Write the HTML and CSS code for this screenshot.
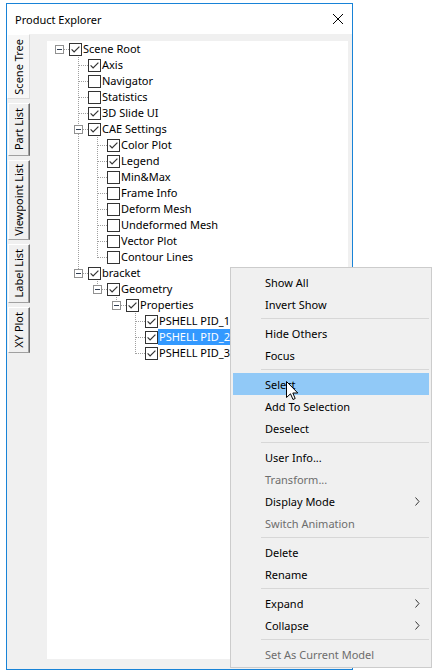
FILE: index.html
```html
<!DOCTYPE html>
<html>
<head>
<meta charset="utf-8">
<title>Product Explorer</title>
<link rel="stylesheet" href="styles.css">
</head>
<body>
<svg class="defs" width="0" height="0" aria-hidden="true">
  <defs>
    <symbol id="cb-on" viewBox="0 0 13 13">
      <rect x="0.5" y="0.5" width="12" height="12" fill="#fff" stroke="#333"/>
      <path d="M2.6 6.4 L5.1 8.9 L10.4 3.6" fill="none" stroke="#333" stroke-width="1.2"/>
    </symbol>
    <symbol id="cb-off" viewBox="0 0 13 13">
      <rect x="0.5" y="0.5" width="12" height="12" fill="#fff" stroke="#333"/>
    </symbol>
  </defs>
</svg>
<div class="screen">
  <div class="window">
    <div class="titlebar">
      <span class="title">Product Explorer</span>
      <svg class="close" width="10" height="10" viewBox="0 0 10 10"><path d="M0 0 L10 10 M10 0 L0 10" stroke="#000" stroke-width="1"/></svg>
    </div>
    <div class="win-body">
      <div class="tabs">
        <div class="tab tab-selected tab-scene"><span>Scene Tree</span></div>
        <div class="tab tab-part"><span>Part List</span></div>
        <div class="tab tab-view"><span>Viewpoint List</span></div>
        <div class="tab tab-label"><span>Label List</span></div>
        <div class="tab tab-xy"><span>XY Plot</span></div>
      </div>
      <div class="tree">
        <svg class="tree-lines" width="301" height="618">
          <g stroke="#a0a0a0" stroke-width="1" stroke-dasharray="1 1" shape-rendering="crispEdges" fill="none">
            <line x1="17" y1="8.5" x2="22" y2="8.5"/>
            <line x1="31.5" y1="16" x2="31.5" y2="84"/>
            <line x1="31.5" y1="93" x2="31.5" y2="228"/>
            <line x1="32" y1="24.5" x2="41" y2="24.5"/>
            <line x1="32" y1="40.5" x2="41" y2="40.5"/>
            <line x1="32" y1="56.5" x2="41" y2="56.5"/>
            <line x1="32" y1="72.5" x2="41" y2="72.5"/>
            <line x1="36" y1="88.5" x2="41" y2="88.5"/>
            <line x1="36" y1="232.5" x2="41" y2="232.5"/>
            <line x1="50.5" y1="96" x2="50.5" y2="217"/>
            <line x1="51" y1="104.5" x2="60" y2="104.5"/>
            <line x1="51" y1="120.5" x2="60" y2="120.5"/>
            <line x1="51" y1="136.5" x2="60" y2="136.5"/>
            <line x1="51" y1="152.5" x2="60" y2="152.5"/>
            <line x1="51" y1="168.5" x2="60" y2="168.5"/>
            <line x1="51" y1="184.5" x2="60" y2="184.5"/>
            <line x1="51" y1="200.5" x2="60" y2="200.5"/>
            <line x1="51" y1="216.5" x2="60" y2="216.5"/>
            <line x1="50.5" y1="240" x2="50.5" y2="244"/>
            <line x1="55" y1="248.5" x2="60" y2="248.5"/>
            <line x1="69.5" y1="256" x2="69.5" y2="260"/>
            <line x1="74" y1="264.5" x2="79" y2="264.5"/>
            <line x1="88.5" y1="272" x2="88.5" y2="313"/>
            <line x1="89" y1="280.5" x2="98" y2="280.5"/>
            <line x1="89" y1="296.5" x2="98" y2="296.5"/>
            <line x1="89" y1="312.5" x2="98" y2="312.5"/>
          </g>
        </svg>
        <ul class="rows">
          <li class="row l0"><span class="exp"></span><svg class="cb"><use href="#cb-on"/></svg><span class="label">Scene Root</span></li>
          <li class="row l1"><span class="exp-none"></span><svg class="cb"><use href="#cb-on"/></svg><span class="label">Axis</span></li>
          <li class="row l1"><span class="exp-none"></span><svg class="cb"><use href="#cb-off"/></svg><span class="label">Navigator</span></li>
          <li class="row l1"><span class="exp-none"></span><svg class="cb"><use href="#cb-off"/></svg><span class="label">Statistics</span></li>
          <li class="row l1"><span class="exp-none"></span><svg class="cb"><use href="#cb-on"/></svg><span class="label">3D Slide UI</span></li>
          <li class="row l1"><span class="exp"></span><svg class="cb"><use href="#cb-on"/></svg><span class="label">CAE Settings</span></li>
          <li class="row l2"><span class="exp-none"></span><svg class="cb"><use href="#cb-on"/></svg><span class="label">Color Plot</span></li>
          <li class="row l2"><span class="exp-none"></span><svg class="cb"><use href="#cb-on"/></svg><span class="label">Legend</span></li>
          <li class="row l2"><span class="exp-none"></span><svg class="cb"><use href="#cb-off"/></svg><span class="label">Min&amp;Max</span></li>
          <li class="row l2"><span class="exp-none"></span><svg class="cb"><use href="#cb-off"/></svg><span class="label">Frame Info</span></li>
          <li class="row l2"><span class="exp-none"></span><svg class="cb"><use href="#cb-off"/></svg><span class="label">Deform Mesh</span></li>
          <li class="row l2"><span class="exp-none"></span><svg class="cb"><use href="#cb-off"/></svg><span class="label">Undeformed Mesh</span></li>
          <li class="row l2"><span class="exp-none"></span><svg class="cb"><use href="#cb-off"/></svg><span class="label">Vector Plot</span></li>
          <li class="row l2"><span class="exp-none"></span><svg class="cb"><use href="#cb-off"/></svg><span class="label">Contour Lines</span></li>
          <li class="row l1"><span class="exp"></span><svg class="cb"><use href="#cb-on"/></svg><span class="label">bracket</span></li>
          <li class="row l2"><span class="exp"></span><svg class="cb"><use href="#cb-on"/></svg><span class="label">Geometry</span></li>
          <li class="row l3"><span class="exp"></span><svg class="cb"><use href="#cb-on"/></svg><span class="label">Properties</span></li>
          <li class="row l4"><span class="exp-none"></span><svg class="cb"><use href="#cb-on"/></svg><span class="label">PSHELL PID_1</span></li>
          <li class="row l4"><span class="exp-none"></span><svg class="cb"><use href="#cb-on"/></svg><span class="label selected">PSHELL PID_2</span></li>
          <li class="row l4"><span class="exp-none"></span><svg class="cb"><use href="#cb-on"/></svg><span class="label">PSHELL PID_3</span></li>
        </ul>
      </div>
    </div>
  </div>

  <div class="menu">
    <div class="mi">Show All</div>
    <div class="mi">Invert Show</div>
    <div class="sep"></div>
    <div class="mi">Hide Others</div>
    <div class="mi">Focus</div>
    <div class="sep"></div>
    <div class="mi hover">Select</div>
    <div class="mi">Add To Selection</div>
    <div class="mi">Deselect</div>
    <div class="sep"></div>
    <div class="mi">User Info...</div>
    <div class="mi disabled">Transform...</div>
    <div class="mi">Display Mode<svg class="arrow" width="5" height="9" viewBox="0 0 5 9"><path d="M0.5 0.5 L4 4.5 L0.5 8.5" fill="none" stroke="#333" stroke-width="1"/></svg></div>
    <div class="mi disabled">Switch Animation</div>
    <div class="sep"></div>
    <div class="mi">Delete</div>
    <div class="mi">Rename</div>
    <div class="sep"></div>
    <div class="mi">Expand<svg class="arrow" width="5" height="9" viewBox="0 0 5 9"><path d="M0.5 0.5 L4 4.5 L0.5 8.5" fill="none" stroke="#333" stroke-width="1"/></svg></div>
    <div class="mi">Collapse<svg class="arrow" width="5" height="9" viewBox="0 0 5 9"><path d="M0.5 0.5 L4 4.5 L0.5 8.5" fill="none" stroke="#333" stroke-width="1"/></svg></div>
    <div class="sep"></div>
    <div class="mi disabled">Set As Current Model</div>
  </div>

  <svg class="cursor" width="13" height="20" viewBox="0 0 13 20">
    <path d="M0.5 0.5 L0.5 16.5 L4.5 12.8 L7 18.5 L9.2 17.5 L6.8 12 L11.8 12 Z" fill="#fff" stroke="#000" stroke-width="1" stroke-linejoin="miter"/>
  </svg>
</div>
</body>
</html>
```

FILE: styles.css
```css
* { box-sizing: border-box; }

html, body {
  margin: 0;
  padding: 0;
  background: #fff;
}

body {
  font-family: "Noto Sans", "Open Sans", "DejaVu Sans", sans-serif;
  font-size: 11px;
  color: #000;
}

.defs {
  position: absolute;
  width: 0;
  height: 0;
  overflow: hidden;
}

.screen {
  position: relative;
  width: 436px;
  height: 672px;
  overflow: hidden;
  padding: 3px 0 0 6px;
}

.window {
  width: 347px;
  height: 667px;
  border: 1px solid #1883d7;
  background: #f0f0f0;
  display: flex;
  flex-direction: column;
}

.titlebar {
  flex: none;
  height: 30px;
  background: #fff;
  display: flex;
  align-items: center;
  padding-left: 8px;
}

.title {
  font-size: 11px;
  color: #000;
}

.close {
  margin-left: auto;
  margin-right: 9px;
  display: block;
}

.win-body {
  flex: 1;
  display: flex;
  align-items: flex-start;
  padding-right: 4px;
}

/* vertical tabs */
.tabs {
  width: 23px;
  flex: none;
  display: flex;
  flex-direction: column;
  gap: 4px;
}

.tab {
  width: 22px;
  margin-left: 1px;
  display: flex;
  align-items: center;
  justify-content: center;
  background: #f0f0f0;
  border-top: 1px solid #fff;
  border-left: 1px solid #fff;
  border-right: 1px solid #696969;
  border-bottom: 1px solid #a0a0a0;
  box-shadow: inset -1px 0 0 #a0a0a0;
}

.tab span {
  writing-mode: vertical-rl;
  transform: rotate(180deg);
  white-space: nowrap;
  line-height: 14px;
}

.tab-selected {
  width: 23px;
  margin-left: 0;
  background: #f7f7f7;
  border-top: 1px solid #fff;
  border-left: 1px solid #fff;
  border-right: 1px solid #dadada;
  border-bottom: 1px solid #dadada;
  box-shadow: none;
}

.tab-scene { height: 65px; }
.tab-part { height: 53px; }
.tab-view { height: 80px; }
.tab-label { height: 59px; }
.tab-xy { height: 46px; }

/* tree */
.tree {
  position: relative;
  margin-left: 17px;
  margin-top: 7px;
  width: 301px;
  height: 618px;
  background: #fff;
}

.tree-lines {
  position: absolute;
  left: 0;
  top: 0;
}

.rows {
  position: relative;
  list-style: none;
  margin: 0;
  padding: 0;
}

.row {
  height: 16px;
  display: flex;
  align-items: flex-start;
  white-space: nowrap;
}

.l0 { padding-left: 8px; }
.l1 { padding-left: 27px; }
.l2 { padding-left: 46px; }
.l3 { padding-left: 65px; }
.l4 { padding-left: 84px; }

.exp,
.exp-none {
  flex: none;
  width: 9px;
  height: 9px;
  margin-top: 4px;
  margin-right: 5px;
}

.exp {
  border: 1px solid #919191;
  background: #fff;
  display: flex;
  align-items: center;
  justify-content: center;
}

.exp::after {
  content: "";
  width: 5px;
  height: 1px;
  background: #2f3d52;
}

.cb {
  flex: none;
  width: 13px;
  height: 13px;
  margin-top: 2px;
  display: block;
}

.label {
  padding: 0 1px;
  height: 16px;
  line-height: 16px;
}

.label.selected {
  background: #3399ff;
  color: #fff;
}

/* context menu */
.menu {
  position: absolute;
  left: 230px;
  top: 267px;
  width: 202px;
  height: 401px;
  border: 1px solid #cccccc;
  background: #f0f0f0;
  padding: 3px 2px 2px 2px;
}

.mi {
  height: 22px;
  display: flex;
  align-items: center;
  padding-left: 32px;
  white-space: nowrap;
}

.mi.hover {
  background: #91c9f7;
}

.mi.disabled {
  color: #6d6d6d;
}

.arrow {
  margin-left: auto;
  margin-right: 9px;
  display: block;
}

.sep {
  height: 7px;
  display: flex;
  align-items: center;
}

.sep::before {
  content: "";
  flex: 1;
  height: 1px;
  margin-left: 28px;
  background: #d7d7d7;
}

.cursor {
  position: absolute;
  left: 286px;
  top: 381px;
}
```
